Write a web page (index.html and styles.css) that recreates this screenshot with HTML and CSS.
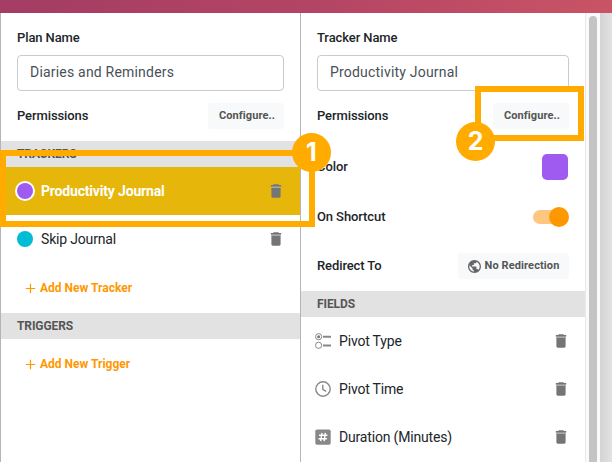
FILE: index.html
```html
<!DOCTYPE html>
<html lang="en">
<head>
<meta charset="utf-8">
<title>Plan editor</title>
<link rel="stylesheet" href="styles.css">
</head>
<body>
<svg class="defs" width="0" height="0">
  <symbol id="trash" viewBox="0 0 12 14"><path fill="#aaa" d="M1.2 2.2h9.6v2H1.2z"/><path fill="#757575" d="M3.7.3h4.6l.7.8h2.2v1.3H.8V1.1H3zM1.4 4h9.2v8.3c0 .8-.6 1.4-1.4 1.4H2.8c-.8 0-1.4-.6-1.4-1.4z"/></symbol>
  <symbol id="plus" viewBox="0 0 12 12"><path d="M6 .8v10.4M.8 6h10.4" stroke="#ff9800" stroke-width="1.3"/></symbol>
</svg>
<header class="topbar"></header>
<main class="workspace">
  <section class="panel plan">
    <div class="form">
      <label class="label">Plan Name</label>
      <div class="input">Diaries and Reminders</div>
      <div class="setting permissions"><span class="label">Permissions</span><button class="btn">Configure..</button></div>
    </div>
    <h2 class="section">TRACKERS</h2>
    <div class="item active"><i class="dot purple"></i><span class="name">Productivity Journal</span><svg class="trash"><use href="#trash"/></svg></div>
    <div class="item"><i class="dot teal"></i><span class="name">Skip Journal</span><svg class="trash"><use href="#trash"/></svg></div>
    <div class="add"><svg class="plus"><use href="#plus"/></svg><span>Add New Tracker</span></div>
    <h2 class="section">TRIGGERS</h2>
    <div class="add"><svg class="plus"><use href="#plus"/></svg><span>Add New Trigger</span></div>
  </section>
  <section class="panel tracker">
    <div class="form">
      <label class="label">Tracker Name</label>
      <div class="input journal">Productivity Journal</div>
      <div class="setting permissions"><span class="label">Permissions</span><button class="btn">Configure..</button></div>
      <div class="setting color"><span class="label">Color</span><i class="swatch"></i></div>
      <div class="setting shortcut"><span class="label">On Shortcut</span><span class="toggle"><i class="knob"></i></span></div>
      <div class="setting redirect"><span class="label">Redirect To</span><button class="btn wide"><svg class="globe" viewBox="2 2 20 20"><path fill="#666" d="M12 2C6.48 2 2 6.48 2 12s4.48 10 10 10 10-4.48 10-10S17.52 2 12 2zm-1 17.93c-3.95-.49-7-3.85-7-7.93 0-.62.08-1.21.21-1.79L9 15v1c0 1.1.9 2 2 2v1.93zm6.9-2.54c-.26-.81-1-1.39-1.9-1.39h-1v-3c0-.55-.45-1-1-1H8v-2h2c.55 0 1-.45 1-1V7h2c1.1 0 2-.9 2-2v-.41c2.93 1.19 5 4.06 5 7.41 0 2.08-.8 3.97-2.1 5.39z"/></svg><span>No Redirection</span></button></div>
    </div>
    <h2 class="section">FIELDS</h2>
    <div class="item field"><svg class="kind" viewBox="0 0 16 16"><g fill="none" stroke="#888"><circle cx="3.6" cy="3.7" r="3.1"/><circle cx="3.6" cy="12.3" r="3.1"/></g><circle cx="3.6" cy="3.7" r="1.5" fill="#777"/><path d="M8 3.8h8M8 12.4h8" stroke="#888" stroke-width="2"/></svg><span class="name">Pivot Type</span><svg class="trash"><use href="#trash"/></svg></div>
    <div class="item field"><svg class="kind" viewBox="0 0 16 16"><g fill="none" stroke="#888" stroke-width="1.4"><circle cx="8" cy="8" r="7.2"/><path d="M7.8 3.8v4.5l3.4 2"/></g></svg><span class="name">Pivot Time</span><svg class="trash"><use href="#trash"/></svg></div>
    <div class="item field"><svg class="kind" viewBox="0 0 16 16"><rect x=".3" y=".5" width="15.4" height="15.2" rx="1.8" fill="#888"/><path d="M7 3.8L5.7 12.2M10.4 3.8L9.1 12.2M4 6.3h8.4M3.5 9.7h8.4" fill="none" stroke="#fff" stroke-width="1.4"/></svg><span class="name">Duration (Minutes)</span><svg class="trash"><use href="#trash"/></svg></div>
  </section>
  <div class="scrollbar"><div class="thumb"></div></div>
  <div class="backdrop"></div>
</main>
<div class="callout one"></div><div class="badge first">1</div>
<div class="callout two"></div><div class="badge second">2</div>
</body>
</html>
```

FILE: styles.css
```css
* { box-sizing: border-box; }
body { margin: 0; width: 612px; height: 462px; overflow: hidden; position: relative; background: #fff; color: #212529; font: 14px/20px Roboto, sans-serif; }
.defs { position: absolute; }
.topbar { height: 13px; background: linear-gradient(100deg, #a33d63, #b44465 50%, #c95465); }
.workspace { display: flex; height: 449px; }
.panel { display: flex; flex-direction: column; border-left: 1px solid #b5b5b5; background: #fff; }
.plan { width: 300px; }
.tracker { width: 285px; }
.form { height: 128px; padding: 15px 16px 0; flex: none; }
.tracker .form { height: 278px; }
.label { display: block; height: 20px; font-size: 13px; font-weight: 500; letter-spacing: -.1px; }
.input { height: 36px; margin-top: 7px; padding: 0 12px; border: 1px solid #c6cbd0; border-radius: 4px; line-height: 33px; color: #495057; letter-spacing: .2px; }
.setting { display: flex; align-items: center; justify-content: space-between; }
.permissions { height: 26px; margin-top: 12px; }
.color { height: 26px; margin-top: 25px; }
.shortcut { height: 20px; margin-top: 27px; }
.redirect { height: 26px; margin-top: 26px; }
.btn { display: flex; align-items: center; justify-content: center; width: 76px; height: 26px; padding: 0 0 1px 2px; border: 0; border-radius: 3px; background: #f8f9fa; color: #555; font: 700 11px/20px Roboto, sans-serif; letter-spacing: .1px; }
.wide { width: 111px; gap: 4px; padding-left: 0; }
.globe { width: 13px; height: 13px; margin-top: 1px; }
.swatch { width: 26px; height: 26px; margin-right: 1px; border-radius: 5px; background: #9f5bf0; }
.toggle { display: flex; justify-content: flex-end; align-items: center; width: 35px; height: 14px; margin-right: 1px; border-radius: 7px; background: #ffc680; }
.knob { flex: none; width: 20px; height: 20px; margin-right: -1px; border-radius: 50%; background: #ff9800; }
.section { flex: none; height: 26px; margin: 0; padding-left: 16px; background: #e2e2e2; color: #555; font-size: 12px; line-height: 27px; font-weight: 700; letter-spacing: -.1px; }
.item { display: flex; align-items: center; flex: none; height: 48px; padding: 0 18px 0 16px; }
.active { background: #e6b60b; color: #fff; font-weight: 700; }
.dot { width: 16px; height: 16px; border-radius: 50%; }
.purple { background: #9f5bf0; box-shadow: 0 0 0 2px #fff; }
.teal { background: #00bcd4; }
.name { margin-left: 8px; flex: 1; letter-spacing: -.18px; }
.trash { width: 12px; height: 14px; }
.field { padding: 0 18px 0 14px; }
.kind { width: 16px; height: 16px; }
.add { display: flex; align-items: center; gap: 4px; flex: none; height: 50px; padding-left: 24px; color: #ff9800; font-size: 12px; font-weight: 700; }
.plus { width: 11px; height: 11px; }
.scrollbar { width: 15px; padding: 3px 3px 0; border-left: 1px solid #eaeaea; background: #fafafa; }
.thumb { width: 8px; height: 460px; border-radius: 4px; background: #c4c4c4; }
.backdrop { width: 12px; background: linear-gradient(90deg, #d4d4d4, #e2e2e2); }
.callout { position: absolute; border: 6px solid #ffab00; }
.one { left: 0; top: 150px; width: 315px; height: 77px; }
.two { left: 475px; top: 86px; width: 109px; height: 55px; }
.badge { position: absolute; width: 39px; height: 39px; border-radius: 50%; background: #ffab00; color: #fff; font: 700 25px/38px Inter, sans-serif; text-align: center; }
.first { left: 292px; top: 133px; }
.second { left: 456px; top: 122px; }
```
